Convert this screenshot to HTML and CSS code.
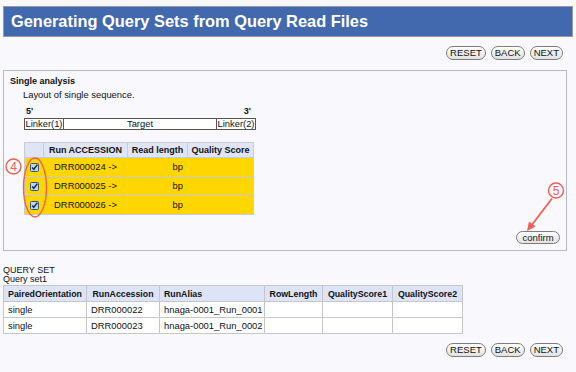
FILE: index.html
```html
<!DOCTYPE html>
<html>
<head>
<meta charset="utf-8">
<link rel="stylesheet" href="styles.css">
</head>
<body>
<div class="page">
  <h1 class="title">Generating Query Sets from Query Read Files</h1>
  <div class="actions">
    <button class="btn">RESET</button>
    <button class="btn">BACK</button>
    <button class="btn">NEXT</button>
  </div>

  <section class="panel">
    <div class="panel-title">Single analysis</div>
    <div class="desc">Layout of single sequence.</div>
    <div class="layout">
      <div class="ends"><span>5'</span><span>3'</span></div>
      <div class="bar">
        <span class="seg linker">Linker(1)</span>
        <span class="seg target">Target</span>
        <span class="seg linker">Linker(2)</span>
      </div>
    </div>
    <table class="runs">
      <thead>
        <tr><th class="c-chk"></th><th class="c-acc">Run ACCESSION</th><th class="c-len">Read length</th><th class="c-q">Quality Score</th></tr>
      </thead>
      <tbody>
        <tr><td class="chk"><svg width="9" height="9" viewBox="0 0 9 9"><rect x="0.5" y="0.5" width="8" height="8" rx="1" fill="#b9d6f2" stroke="#3d5678"/><path d="M2.2 4.4 L3.8 6.3 L7.4 1.6" fill="none" stroke="#1c2a44" stroke-width="1.5"/></svg></td><td class="acc">DRR000024 -&gt;</td><td class="len">bp</td><td></td></tr>
        <tr><td class="chk"><svg width="9" height="9" viewBox="0 0 9 9"><rect x="0.5" y="0.5" width="8" height="8" rx="1" fill="#b9d6f2" stroke="#3d5678"/><path d="M2.2 4.4 L3.8 6.3 L7.4 1.6" fill="none" stroke="#1c2a44" stroke-width="1.5"/></svg></td><td class="acc">DRR000025 -&gt;</td><td class="len">bp</td><td></td></tr>
        <tr><td class="chk"><svg width="9" height="9" viewBox="0 0 9 9"><rect x="0.5" y="0.5" width="8" height="8" rx="1" fill="#b9d6f2" stroke="#3d5678"/><path d="M2.2 4.4 L3.8 6.3 L7.4 1.6" fill="none" stroke="#1c2a44" stroke-width="1.5"/></svg></td><td class="acc">DRR000026 -&gt;</td><td class="len">bp</td><td></td></tr>
      </tbody>
    </table>
    <div class="confirm-row"><button class="btn confirm">confirm</button></div>
  </section>

  <div class="qs-title">QUERY SET</div>
  <div class="qs-name">Query set1</div>
  <table class="qs">
    <thead>
      <tr><th class="q1">PairedOrientation</th><th class="q2">RunAccession</th><th class="q3">RunAlias</th><th class="q4">RowLength</th><th class="q5">QualityScore1</th><th class="q6">QualityScore2</th></tr>
    </thead>
    <tbody>
      <tr><td>single</td><td>DRR000022</td><td>hnaga-0001_Run_0001</td><td></td><td></td><td></td></tr>
      <tr><td>single</td><td>DRR000023</td><td>hnaga-0001_Run_0002</td><td></td><td></td><td></td></tr>
    </tbody>
  </table>
  <div class="actions bottom">
    <button class="btn">RESET</button>
    <button class="btn">BACK</button>
    <button class="btn">NEXT</button>
  </div>

  <svg class="annot" width="576" height="372" viewBox="0 0 576 372">
    <g fill="none" stroke="#ef5f55" stroke-width="1.4">
      <ellipse cx="35" cy="187.5" rx="11.5" ry="29.5"/>
      <circle cx="13.5" cy="166.5" r="7.5"/>
      <circle cx="556" cy="190.5" r="7.5"/>
      <line x1="552" y1="198.5" x2="531" y2="226" stroke-width="1.8"/>
    </g>
    <path d="M527 231 L529 221.5 L535.5 226.5 Z" fill="#ef5f55"/>
    <g fill="#ef5f55" font-family="Liberation Sans, Arial, sans-serif" font-size="12" text-anchor="middle">
      <text x="13.5" y="170.8">4</text>
      <text x="556" y="194.8">5</text>
    </g>
  </svg>
</div>
</body>
</html>
```

FILE: styles.css
```css
html, body {
  margin: 0;
  padding: 0;
  background: #f8f8fd;
}

body {
  font-family: "Liberation Sans", Arial, sans-serif;
  font-size: 9.4px;
  color: #111;
}

.page {
  position: relative;
  width: 576px;
  height: 372px;
  overflow: hidden;
  padding-top: 6px;
  box-sizing: border-box;
}

.title {
  margin: 0 3px;
  height: 31px;
  box-sizing: border-box;
  border: 1px solid #9a9aa6;
  background: #4268ae;
  color: #fff;
  font-size: 16.4px;
  font-weight: bold;
  line-height: 29px;
  padding-left: 7px;
}

.actions {
  display: flex;
  justify-content: flex-end;
  gap: 5px;
  margin: 9px 13px 0 0;
}

.actions.bottom {
  margin-top: 9px;
}

.btn {
  height: 14px;
  box-sizing: border-box;
  padding: 0 3px;
  border: 1px solid #7c7c7c;
  border-radius: 7px;
  background: linear-gradient(#ffffff, #e2e2e2);
  font-family: "Liberation Sans", Arial, sans-serif;
  font-size: 9.5px;
  line-height: 12px;
  color: #111;
}

.panel {
  margin: 10px 9px 0 3px;
  height: 181px;
  box-sizing: border-box;
  border: 1px solid #b9b9c2;
  padding: 5px 6px 6px 6px;
  display: flex;
  flex-direction: column;
  align-items: flex-start;
}

.panel-title {
  font-weight: bold;
  font-size: 9px;
  line-height: 11px;
}

.desc {
  margin: 2px 0 0 13px;
  line-height: 11px;
}

.layout {
  margin: 6px 0 0 14px;
  width: 232px;
}

.ends {
  display: flex;
  justify-content: space-between;
  padding: 0 5px 0 2px;
  font-weight: bold;
  font-size: 9px;
  line-height: 10px;
}

.bar {
  margin-top: 2px;
  height: 12px;
  box-sizing: border-box;
  border: 1px solid #555;
  background: #fff;
  display: flex;
  line-height: 10px;
}

.seg.linker {
  width: 38px;
  flex: none;
  text-align: center;
}

.seg.target {
  flex: 1;
  text-align: center;
  border-left: 1px solid #555;
  border-right: 1px solid #555;
}

.runs {
  margin: 12px 0 0 14px;
  border-collapse: collapse;
  table-layout: fixed;
  width: 229px;
}

.runs th, .runs td {
  box-sizing: border-box;
  border: 1px solid #c9cbd8;
  padding: 0 3px;
  white-space: nowrap;
}

.runs th {
  background: #dfe5f4;
  height: 15px;
  font-size: 9px;
  font-weight: bold;
  line-height: 12px;
}

.runs td {
  background: #ffd600;
  height: 19px;
  line-height: 12px;
}

.runs .c-chk { width: 19px; padding: 0; }
.runs .c-acc { width: 84px; }
.runs .c-len { width: 60px; }
.runs .c-q { width: 66px; }

.runs td.chk {
  padding: 0;
  text-align: center;
}

.runs td.chk svg {
  display: block;
  margin: 0 auto;
}

.runs td.acc {
  text-align: center;
}

.runs td.len {
  text-align: right;
  padding-right: 4px;
}

.confirm-row {
  margin-top: auto;
  align-self: stretch;
  display: flex;
  justify-content: flex-end;
}

.btn.confirm {
  height: 13px;
  padding: 0 5px;
  line-height: 11px;
  width: 44px;
}

.qs-title {
  margin: 15px 0 0 3px;
  line-height: 9px;
  font-size: 9px;
}

.qs-name {
  margin-left: 3px;
  line-height: 9px;
  font-size: 9px;
}

.qs {
  margin: 1px 0 0 3px;
  border-collapse: collapse;
  table-layout: fixed;
  width: 459px;
  background: #fff;
}

.qs th, .qs td {
  box-sizing: border-box;
  border: 1px solid #c6c6c6;
  height: 16px;
  padding: 0 4px;
  line-height: 12px;
  white-space: nowrap;
  overflow: hidden;
}

.qs th {
  background: #dde4f8;
  font-weight: bold;
  font-size: 8.8px;
  text-align: center;
  padding: 0 2px;
}

.qs .q1 { width: 83px; }
.qs .q2 { width: 73px; }
.qs .q3 { width: 105px; text-align: left; padding-left: 4px; }
.qs .q4 { width: 58px; }
.qs .q5 { width: 70px; }
.qs .q6 { width: 70px; }

.annot {
  position: absolute;
  left: 0;
  top: 0;
  pointer-events: none;
}
```
